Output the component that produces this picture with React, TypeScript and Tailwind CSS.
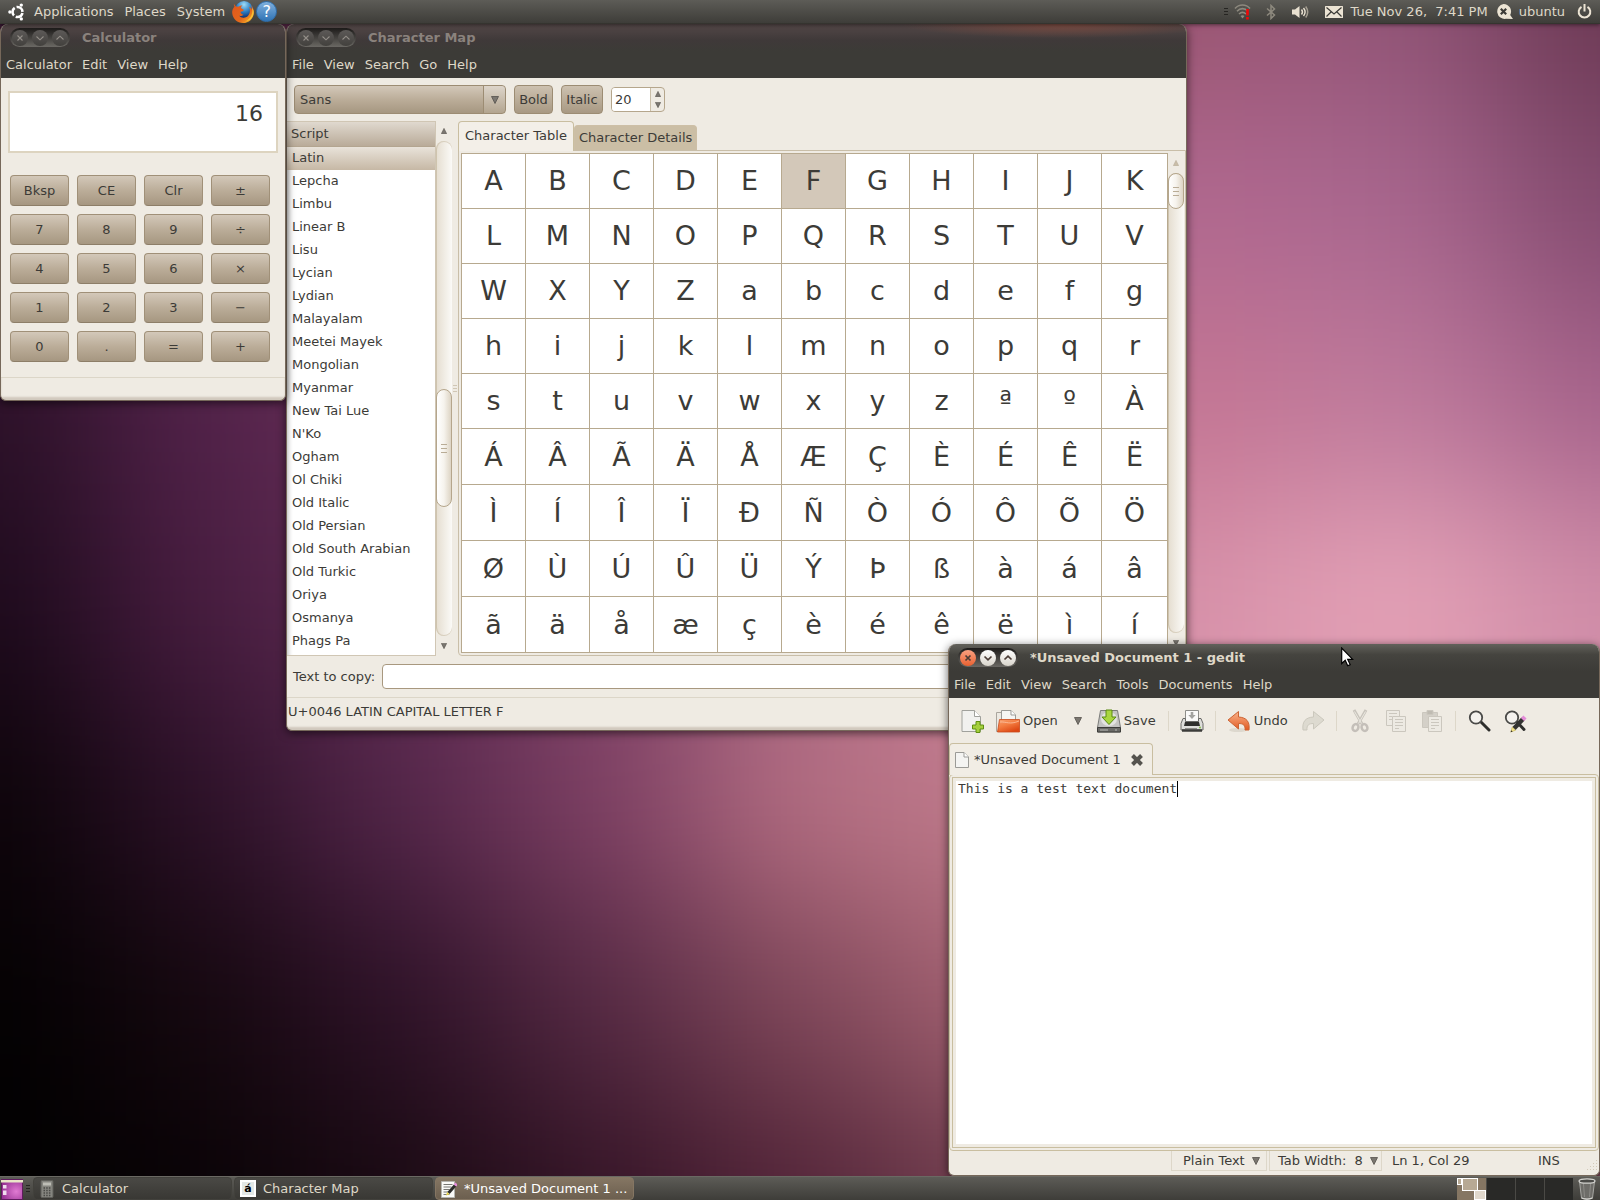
// App.tsx
import React from "react";
import clsx from "clsx";

const SCRIPTS = [
  "Latin", "Lepcha", "Limbu", "Linear B", "Lisu", "Lycian", "Lydian", "Malayalam",
  "Meetei Mayek", "Mongolian", "Myanmar", "New Tai Lue", "N'Ko", "Ogham", "Ol Chiki",
  "Old Italic", "Old Persian", "Old South Arabian", "Old Turkic", "Oriya", "Osmanya", "Phags Pa",
];

const CHAR_ROWS = [
  "ABCDEFGHIJK",
  "LMNOPQRSTUV",
  "WXYZabcdefg",
  "hijklmnopqr",
  "stuvwxyzªºÀ",
  "ÁÂÃÄÅÆÇÈÉÊË",
  "ÌÍÎÏÐÑÒÓÔÕÖ",
  "ØÙÚÛÜÝÞßàáâ",
  "ãäåæçèéêëìí",
];

const CALC_KEYS = [
  "Bksp", "CE", "Clr", "±",
  "7", "8", "9", "÷",
  "4", "5", "6", "×",
  "1", "2", "3", "−",
  "0", ".", "=", "+",
];

// wallpaper colours on a 200px mesh, blurred together
const MESH = [
  ["#3a1834", "#5a2a4c", "#6a3050", "#7a3a58", "#8a4560", "#8a4560", "#9a5672", "#905476", "#6a3852"],
  ["#34152f", "#5c2850", "#703460", "#88446c", "#a05878", "#b06684", "#b06890", "#a8668e", "#824a6e"],
  ["#2c1128", "#52224a", "#6a3058", "#88486c", "#a86080", "#bc6c88", "#c47694", "#be7a9c", "#a5628a"],
  ["#1d0a1c", "#481d40", "#602c54", "#804468", "#a86884", "#cc8098", "#d893ab", "#e6a4b8", "#d08da8"],
  ["#0c0409", "#2c1128", "#54264a", "#7e4064", "#b46e82", "#c07c8c", "#d893ab", "#d893ab", "#cf8ca8"],
  ["#030102", "#15080f", "#2e1228", "#562a44", "#80485a", "#a46272", "#a86474", "#a86474", "#a86474"],
  ["#000000", "#090306", "#190a12", "#341426", "#522438", "#703e4e", "#6c3c4c", "#6c3c4c", "#6c3c4c"],
];

const Wallpaper = () => (
  <svg
    className="absolute inset-0 h-full w-full"
    viewBox="0 0 1600 1200"
    preserveAspectRatio="none"
    aria-hidden="true"
  >
    <defs>
      <filter id="mesh" x="-400" y="-400" width="2400" height="2000" filterUnits="userSpaceOnUse" colorInterpolationFilters="sRGB">
        <feGaussianBlur stdDeviation="75" />
      </filter>
    </defs>
    <g filter="url(#mesh)">
      {MESH.map((row, r) =>
        row.map((fill, c) => (
          <rect
            key={`${r}-${c}`}
            x={c === 0 ? -400 : c * 200 - 100}
            y={r === 0 ? -400 : r * 200 - 100}
            width={c === 0 || c === 8 ? 501 : 201}
            height={r === 0 || r === 6 ? 501 : 201}
            fill={fill}
          />
        ))
      )}
    </g>
  </svg>
);

const UbuntuLogo = () => (
  <svg width="18" height="18" viewBox="0 0 18 18" fill="none" aria-hidden="true">
    <circle cx="9.5" cy="9" r="5" stroke="#fff" strokeWidth="2.6" strokeDasharray="8.5 2" strokeDashoffset="-1" />
    <circle cx="1.9" cy="9" r="1.7" fill="#fff" />
    <circle cx="13.3" cy="2.1" r="1.7" fill="#fff" />
    <circle cx="13.3" cy="15.9" r="1.7" fill="#fff" />
  </svg>
);

const FirefoxIcon = () => (
  <svg width="24" height="24" viewBox="0 0 24 24" aria-hidden="true">
    <defs>
      <radialGradient id="globe" cx="0.5" cy="0.2" r="0.8">
        <stop offset="0" stopColor="#9fdcf7" />
        <stop offset="0.5" stopColor="#2d7fc4" />
        <stop offset="1" stopColor="#0b1f5c" />
      </radialGradient>
      <linearGradient id="fox" x1="0" y1="0" x2="1" y2="1">
        <stop offset="0" stopColor="#e0561c" />
        <stop offset="0.6" stopColor="#e4661b" />
        <stop offset="1" stopColor="#fbc62b" />
      </linearGradient>
    </defs>
    <circle cx="13" cy="10" r="9" fill="url(#globe)" />
    <path
      d="M3 3.400c-.3 1.400 0 2.400.500 3C1.600 8.600 1 10.800 1.200 13 1.700 19 6.400 23 12 23s10.800-4.400 10.800-10.600c0-3-1-5.400-2.600-7.200.7 1.800.7 3 .5 4.600-.6-1.700-1.500-2.400-2.500-3 1.300 3.600 1 7-1.300 9.200-2.500 2.400-7 2.200-8.800-.6 1.600.9 3.400.7 4.600-.6-1.300-.2-2.500-1-3.200-2.200.3-1.300 1.600-1.300 2.800-1.600.5-.6.3-1.400-.3-1.700-1.200-.6-1.900-1-2.200-1.500.2-1 .8-1.700 1.700-2.300-1.500-.2-2.900.2-4 1.200-1-.2-1.700-.2-2.200 0C4.300 5.600 3.300 4.700 3 3.400z"
      fill="url(#fox)"
    />
    <path d="M21 8c1.400 5-.8 11-7 13.500 5-.5 8.800-4.500 8.800-9.500 0-1.500-.8-3-1.800-4z" fill="#fcd03a" opacity="0.8" />
  </svg>
);

const HelpIcon = () => (
  <span className="flex h-[21px] w-[21px] items-center justify-center rounded-full border border-[#2f6fae] bg-linear-to-b from-[#7fb0dd] to-[#2f74b5] text-base leading-4 text-white">
    ?
  </span>
);

const WifiIcon = () => (
  <svg width="18" height="16" viewBox="0 0 18 16" fill="none" aria-hidden="true">
    <path d="M1 4.500C5-.2 12-.2 16 4.500" stroke="#8d897e" strokeWidth="1.600" />
    <path d="M3 7.200C6.200 3.800 10.800 3.800 14 7.200" stroke="#8d897e" strokeWidth="1.600" />
    <path d="M5 10C7.200 8 9.800 8 12 10" stroke="#8d897e" strokeWidth="1.600" />
    <path d="M6.500 12l2 2.600 2-2.600c-1.200-1-2.800-1-4 0z" fill="#8d897e" />
    <path d="M13.500 5v6.500M13.500 13v2.500" stroke="#f00808" strokeWidth="2.600" />
  </svg>
);

const BluetoothIcon = () => (
  <svg width="10" height="16" viewBox="0 0 10 16" fill="none" stroke="#8d897e" strokeWidth="1.500" aria-hidden="true">
    <path d="M1 4.500l7.500 6.500L5 14.500v-13L8.500 5 1 11.500" />
  </svg>
);

const VolumeIcon = () => (
  <svg width="17" height="14" viewBox="0 0 17 14" fill="none" aria-hidden="true">
    <path d="M0 4.500h3L7.500 1v12L3 9.500H0z" fill="#e8e0d0" />
    <path d="M9.500 4.500q2 2.500 0 5M11.500 3q3.200 4 0 8" stroke="#e8e0d0" strokeWidth="1.400" />
    <path d="M13.700 1.500q4 5.500 0 11" stroke="#a39d90" strokeWidth="1.500" />
  </svg>
);

const MailIcon = () => (
  <svg width="18" height="12" viewBox="0 0 18 12" fill="none" aria-hidden="true">
    <rect width="18" height="12" rx="0.500" fill="#ece4d4" />
    <path d="M1.500 1.500L9 8l7.500-6.500M1.500 10.500L6 6M16.500 10.500L12 6" stroke="#3c3b37" strokeWidth="1.200" />
  </svg>
);

const ChatIcon = () => (
  <svg width="17" height="16" viewBox="0 0 17 16" fill="none" aria-hidden="true">
    <path d="M7.500 0a7.500 7.500 0 1 0 2.500 14.800L17 15l-2.800-4A7.500 7.500 0 0 0 7.500 0z" fill="#ece4d4" />
    <path d="M4.800 4.800l5.400 5.400M10.200 4.800l-5.400 5.400" stroke="#3c3b37" strokeWidth="2.200" />
  </svg>
);

const PowerIcon = () => (
  <svg width="15" height="15" viewBox="0 0 15 15" fill="none" stroke="#ece4d4" strokeWidth="2" aria-hidden="true">
    <path d="M4.500 2.800a5.800 5.800 0 1 0 6 0M7.500 0v7.500" />
  </svg>
);

const Handle = () => (
  <span className="flex flex-col gap-0.5" aria-hidden="true">
    <span className="h-px w-1 bg-[#262522]" />
    <span className="h-px w-1 bg-[#262522]" />
    <span className="h-px w-1 bg-[#262522]" />
  </span>
);

const TopPanel = () => (
  <header className="relative z-10 flex h-6 shrink-0 items-center border-b border-[#35342f] bg-linear-to-b from-[#5d5c57] to-[#3e3d39] text-[#dfd8c8] shadow-[0_1px_4px_rgba(0,0,0,0.500)]">
    <nav className="flex items-center pl-2">
      <UbuntuLogo />
      <div className="flex gap-[11px] pr-1.5 pl-2">
        <button>Applications</button>
        <button>Places</button>
        <button>System</button>
      </div>
      <button aria-label="Firefox"><FirefoxIcon /></button>
      <button aria-label="Help" className="ml-px"><HelpIcon /></button>
    </nav>
    <div className="ml-auto flex items-center pr-2">
      <Handle />
      <span className="ml-1.5"><WifiIcon /></span>
      <span className="ml-3.5"><BluetoothIcon /></span>
      <span className="ml-4"><VolumeIcon /></span>
      <span className="ml-4"><MailIcon /></span>
      <time className="ml-2 whitespace-pre">{"Tue Nov 26,  7:41 PM"}</time>
      <span className="ml-2"><ChatIcon /></span>
      <button className="ml-1.5">ubuntu</button>
      <button className="ml-3" aria-label="Power"><PowerIcon /></button>
    </div>
  </header>
);

const BUTTON_GLYPHS = [
  { name: "Close", d: "M5.500 5.500l5 5M10.500 5.500l-5 5" },
  { name: "Minimize", d: "M4.500 6.500L8 9.800l3.500-3.300" },
  { name: "Maximize", d: "M4.500 9.500L8 6.200l3.500 3.300" },
];

const WindowButtons = ({ active }: { active: boolean }) => (
  <div className="flex h-[19px] items-center gap-1 rounded-full bg-linear-to-b from-[#1e1c1b] to-[#6b6964] px-0.5">
    {BUTTON_GLYPHS.map(({ name, d }, i) => (
      <button
        key={name}
        aria-label={name}
        className={clsx(
          "flex h-4 w-4 items-center justify-center rounded-full",
          active && i === 0 && "bg-linear-to-b from-[#f9a080] to-[#e8602e]",
          active && i > 0 && "bg-linear-to-b from-white to-[#d8d4cb]",
          !active && "bg-linear-to-b from-[#5d5a58] to-[#42403d]"
        )}
      >
        <svg width="16" height="16" viewBox="0 0 16 16" fill="none" stroke={active ? "#4a3c36" : "#938e88"} strokeWidth={active ? 1.7 : 1.1}>
          <path d={d} />
        </svg>
      </button>
    ))}
  </div>
);

interface WindowProps {
  title: string;
  menus: string[];
  active?: boolean;
  glow?: boolean;
  className: string;
  children: React.ReactNode;
}

const Window: React.FC<WindowProps> = ({ title, menus, active = false, glow = false, className, children }) => (
  <section
    className={clsx(
      "absolute flex flex-col overflow-hidden rounded-t-lg rounded-b-md border border-t-0 border-[#76685a] bg-[#efebe3] text-[#3c3b37] shadow-[0_2px_10px_rgba(0,0,0,0.600)]",
      className
    )}
  >
    <div
      className={clsx(
        "flex h-[27px] shrink-0 items-center pl-[9px]",
        active && "bg-linear-to-b from-[#62615b] via-[#45443f] via-40% to-[#3c3b37]",
        !active && !glow && "bg-linear-to-b from-[#544848] via-[#3f3939] via-60% to-[#3c3b37]",
        glow && "bg-[radial-gradient(160px_14px_at_86%_0,#7a4a40,transparent),linear-gradient(#544848,#3f3939_60%,#3c3b37)]"
      )}
    >
      <WindowButtons active={active} />
      <h1 className={clsx("ml-3 font-bold", active ? "text-[#dfd8c8]" : "text-[#8a827d]")}>{title}</h1>
    </div>
    <nav className="flex h-[27px] shrink-0 items-center gap-2.5 bg-[#3c3b37] pl-[5px] text-[#dfd8c8]">
      {menus.map((menu) => (
        <button key={menu}>{menu}</button>
      ))}
    </nav>
    {children}
  </section>
);

const Triangle = ({ up = false, size = 8, faded = false }: { up?: boolean; size?: number; faded?: boolean }) => (
  <svg width={size} height={size} viewBox="0 0 8 8" aria-hidden="true">
    <path d={up ? "M4 .5L7.500 7.500h-7z" : "M.5.500h7L4 7.500z"} fill={faded ? "#c9bda8" : "#7a7670"} stroke={faded ? "#b8ac98" : "#55524c"} strokeWidth="0.800" />
  </svg>
);

const Calculator = () => (
  <Window title="Calculator" menus={["Calculator", "Edit", "View", "Help"]} className="top-0 left-0 w-[286px]">
    <input
      aria-label="Result"
      readOnly
      value="16"
      className="mx-[7px] mt-[13px] h-[62px] border-2 border-[#ddd4c0] bg-white pr-[13px] pb-[18px] text-right text-[22px] outline-none"
    />
    <div className="mt-[22px] mr-[15px] ml-[9px] grid grid-cols-4 gap-2">
      {CALC_KEYS.map((key) => (
        <button
          key={key}
          className="h-[31px] rounded border border-[#a09078] border-b-[#8d7e68] bg-linear-to-b from-[#d3c8b9] via-[#bbad99] to-[#a69781]"
        >
          {key}
        </button>
      ))}
    </div>
    <div className="mt-[15px] h-[23px] border-t border-[#dcd6c8] shadow-[inset_0_-3px_2px_rgba(120,100,80,0.250)]" />
  </Window>
);

interface ScrollbarProps {
  thumb: string;
  topFaded?: boolean;
}

const Scrollbar: React.FC<ScrollbarProps> = ({ thumb, topFaded = false }) => (
  <div className="flex w-4 shrink-0 flex-col items-center" aria-hidden="true">
    <span className="flex h-5 items-center"><Triangle up size={6} faded={topFaded} /></span>
    <div className="relative w-full flex-1 rounded-full border-l border-[#cfc4ae] bg-linear-to-r from-[#e6dfd2] to-[#fbfaf7] shadow-[inset_0_1px_0_#d8cfbe,inset_0_-1px_0_#d8cfbe]">
      <div
        className={clsx(
          "absolute -left-px flex w-4 flex-col items-center justify-center gap-[3px] rounded-lg border border-[#b5a68c] bg-linear-to-r from-white via-[#f6f3ed] to-[#ddd4c4]",
          thumb
        )}
      >
        <span className="h-px w-1.5 bg-[#b9ac96]" />
        <span className="h-px w-1.5 bg-[#b9ac96]" />
        <span className="h-px w-1.5 bg-[#b9ac96]" />
      </div>
    </div>
    <span className="flex h-5 items-center"><Triangle size={6} /></span>
  </div>
);

const CharacterMap = () => (
  <Window
    glow
    title="Character Map"
    menus={["File", "View", "Search", "Go", "Help"]}
    className="top-0 left-[286px] w-[901px]"
  >
    <div className="flex h-[43px] items-center gap-2 pl-[7px]">
      <div className="relative h-[29px] w-[212px]">
        <select
          aria-label="Font family"
          className="h-full w-full appearance-none rounded border border-[#9c8c73] bg-linear-to-b from-[#d3c8b9] via-[#bbad99] to-[#a69781] px-[5px] outline-none"
        >
          <option>Sans</option>
        </select>
        <span className="pointer-events-none absolute inset-y-px right-px flex w-[22px] items-center justify-center rounded-r border-l border-[#9c8c73] bg-linear-to-b from-[#ddd5ca] to-[#b3a590]">
          <Triangle />
        </span>
      </div>
      <button className="h-[29px] w-[39px] rounded border border-[#9c8c73] bg-linear-to-b from-[#cdc1b0] to-[#a89983]">Bold</button>
      <button className="h-[29px] w-[42px] rounded border border-[#9c8c73] bg-linear-to-b from-[#cdc1b0] to-[#a89983]">Italic</button>
      <div className="flex h-[25px] w-[54px] overflow-hidden rounded border border-[#b5a68c] bg-[#efebe3]">
        <input aria-label="Font size" defaultValue="20" className="w-[39px] border-r border-[#c9bea8] bg-white pl-[3px] outline-none" />
        <span className="flex flex-1 flex-col items-center justify-around">
          <button aria-label="Increase"><Triangle up size={6} /></button>
          <button aria-label="Decrease"><Triangle size={6} /></button>
        </span>
      </div>
    </div>

    <div className="flex h-[535px]">
      <div className="w-[149px] border border-l-0 border-[#d0c6b4] bg-white shadow-[inset_6px_0_5px_-5px_rgba(0,0,0,0.300)]">
        <div className="flex h-[25px] items-center border-b border-[#b3a590] bg-linear-to-b from-[#e0d9cf] to-[#b9ab99] pl-1">Script</div>
        <ul>
          {SCRIPTS.map((name, i) => (
            <li key={name} className={clsx("h-[23px] pl-[5px] leading-[22px]", i === 0 && "bg-linear-to-b from-[#e9e3da] to-[#c6b8a5]")}>
              {name}
            </li>
          ))}
        </ul>
      </div>
      <Scrollbar thumb="top-[248px] h-[118px]" />
      <div className="flex w-1.5 flex-col items-center justify-center gap-0.5" aria-hidden="true">
        <span className="h-px w-1 bg-[#d0c6b4]" />
        <span className="h-px w-1 bg-[#d0c6b4]" />
        <span className="h-px w-1 bg-[#d0c6b4]" />
      </div>

      <div className="flex min-w-0 flex-1 flex-col">
        <div className="flex h-[29px] items-end">
          <button className="relative -mb-px h-[30px] rounded-t border border-b-0 border-[#c9bea0] bg-[#f3efe8] px-1.5 pb-0.5">Character Table</button>
          <button className="h-[25px] rounded-t border border-b-0 border-[#cdbfa6] bg-[#cbbea5] px-1">Character Details</button>
        </div>
        <div className="flex flex-1 rounded-b border border-[#c9bea8] p-0.5 pr-px">
          <table className="min-w-0 flex-1 border-separate border-spacing-0 border-t border-l border-[#b7a98f] bg-white text-center text-[27px] leading-8">
            <tbody className="contents">
              {CHAR_ROWS.map((row, r) => (
                <tr key={row} className={clsx("flex", r < 5 ? "h-[55px]" : "h-[56px]")}>
                  {[...row].map((ch) => (
                    <td
                      key={ch}
                      className={clsx(
                        "flex w-16 items-center justify-center border-r border-b border-[#b7a98f] last:flex-1",
                        ch === "F" && "bg-[#d3c8b9]"
                      )}
                    >
                      {ch}
                    </td>
                  ))}
                </tr>
              ))}
            </tbody>
          </table>
          <Scrollbar thumb="top-0 h-9" topFaded />
        </div>
      </div>
    </div>

    <div className="mt-2 flex h-[25px] items-center gap-[7px] px-1.5">
      <label htmlFor="copy">Text to copy:</label>
      <input id="copy" className="h-full flex-1 rounded border border-[#a8987f] bg-white px-1 outline-none" />
    </div>
    <footer className="mt-2 h-[33px] border-t border-[#dcd6c8] pl-px leading-[27px] shadow-[inset_0_-3px_2px_rgba(120,100,80,0.250)]">
      U+0046 LATIN CAPITAL LETTER F
    </footer>
  </Window>
);

const NewIcon = () => (
  <svg width="24" height="24" viewBox="0 0 24 24" aria-hidden="true">
    <path d="M2 1.500h12.500l6 6v15H2z" fill="#f1f1ef" stroke="#a0a19c" />
    <path d="M14.500 1.500v6h6" fill="#fff" stroke="#a0a19c" />
    <path d="M16 12.500h4v3.500h3.500v4h-3.500v3.500h-4V20h-3.500v-4h3.500z" fill="#a4cf3c" stroke="#5f8f10" />
  </svg>
);

const OpenIcon = () => (
  <svg width="24" height="24" viewBox="0 0 24 24" aria-hidden="true">
    <defs>
      <linearGradient id="folder" x1="0" y1="0" x2="0.600" y2="1">
        <stop offset="0" stopColor="#f9a271" />
        <stop offset="0.500" stopColor="#f37b3f" />
        <stop offset="1" stopColor="#dd4814" />
      </linearGradient>
    </defs>
    <path d="M.5 3.500h8v19h-8z" fill="#ece9e2" stroke="#aaa69e" />
    <path d="M5.500 1.500H15l4.500 4.500v9h-14z" fill="#f6f6f4" stroke="#9b9b97" />
    <path d="M15 1.500V6h4.500" fill="#fff" stroke="#9b9b97" />
    <path d="M3.500 10.500h20V23H1.500z" fill="url(#folder)" stroke="#c94a1c" strokeWidth="0.800" />
    <path d="M4 13c6-.5 10 3 19-1" stroke="#fcc3a2" strokeWidth="0.800" fill="none" />
  </svg>
);

const SaveIcon = () => (
  <svg width="24" height="24" viewBox="0 0 24 24" aria-hidden="true">
    <path d="M3.500 1.500h17l3 17v4.500H.5v-4.500z" fill="#c4c4c2" stroke="#7b7b79" />
    <ellipse cx="12" cy="10" rx="8" ry="7" fill="#e3e3e1" />
    <path d="M.5 18.500h23V23H.5z" fill="#6a6a67" stroke="#3c3c3a" />
    <path d="M3 21h8M18 21h2" stroke="#b6b6b3" />
    <path d="M9 1h6v7h4l-7 7.500L5 8h4z" fill="#a9d63f" stroke="#5a8a12" />
  </svg>
);

const PrintIcon = () => (
  <svg width="24" height="24" viewBox="0 0 24 24" aria-hidden="true">
    <path d="M5.500 1.500h13v11h-13z" fill="#fafaf9" stroke="#8e8e8a" />
    <path d="M10.700 3h2.600v3h2.400L12 10 8.300 6h2.400z" fill="#a3a3a0" />
    <path d="M3 9.500h2.500v3h13v-3H21l2 5v6.500H1v-6.500z" fill="#dededb" stroke="#6a6a67" />
    <path d="M5 13h14l1 4H4z" fill="#2f2f2d" />
    <path d="M2 21.500h20" stroke="#3c3c3a" strokeWidth="2.500" />
    <path d="M5 19.500h12" stroke="#8e8e8a" />
    <circle cx="20" cy="18.500" r="0.900" fill="#7cba3c" />
  </svg>
);

const UndoIcon = () => (
  <svg width="24" height="24" viewBox="0 0 24 24" aria-hidden="true">
    <defs>
      <linearGradient id="undo" x1="0" y1="0" x2="0" y2="1">
        <stop offset="0" stopColor="#f9b48c" />
        <stop offset="1" stopColor="#e25a22" />
      </linearGradient>
    </defs>
    <ellipse cx="11" cy="21" rx="9" ry="2" fill="#ddd8ce" />
    <path d="M11.500 2.500v5.500c8 .5 11.500 4.500 10.500 13h-4c.5-5-2-6.500-6.500-6.500V20L1 11z" fill="url(#undo)" stroke="#cc6434" strokeLinejoin="round" />
  </svg>
);

const RedoIcon = () => (
  <svg width="24" height="24" viewBox="0 0 24 24" aria-hidden="true">
    <path d="M12.500 2.500v5.500c-8 .5-11.500 4.500-10.500 13h4c-.5-5 2-6.500 6.500-6.500V20L23 11z" fill="#dddad0" stroke="#cbc8bd" strokeLinejoin="round" />
  </svg>
);

const CutIcon = () => (
  <svg width="24" height="24" viewBox="0 0 24 24" fill="none" aria-hidden="true">
    <path d="M6 1l8 14M18 1l-8 14" stroke="#c8c4bc" strokeWidth="3" />
    <path d="M6.500 2.500l7 12M17.500 2.500l-7 12" stroke="#ebe8e1" />
    <ellipse cx="7.500" cy="18.500" rx="2.800" ry="3.500" stroke="#c4bfb9" strokeWidth="2.500" transform="rotate(25 7.500 18.500)" />
    <ellipse cx="16.500" cy="18.500" rx="2.800" ry="3.500" stroke="#c4bfb9" strokeWidth="2.500" transform="rotate(-25 16.500 18.500)" />
  </svg>
);

const CopyIcon = () => (
  <svg width="24" height="24" viewBox="0 0 24 24" fill="#edeae3" stroke="#cbc7be" aria-hidden="true">
    <path d="M2.500 1.500h13v15h-13zM5 4.500h8M5 7.500h3M5 10.500h3" />
    <path d="M8.500 7.500h13v15h-13zM11 10.500h8M11 13.500h8M11 16.500h8M11 19.500h4" />
  </svg>
);

const PasteIcon = () => (
  <svg width="24" height="24" viewBox="0 0 24 24" fill="#edeae3" stroke="#cbc7be" aria-hidden="true">
    <path d="M2.500 3.500h15v15h-15z" fill="#d4d0c8" />
    <path d="M7 1.500h6v4H7z" fill="#bfbbb2" />
    <path d="M8.500 7.500h13v15h-13zM11 10.500h8M11 13.500h8M11 16.500h8M11 19.500h4" />
  </svg>
);

const FindIcon = () => (
  <svg width="24" height="24" viewBox="0 0 24 24" fill="none" aria-hidden="true">
    <path d="M14 13l8 8" stroke="#2e2e2c" strokeWidth="3" strokeLinecap="round" />
    <circle cx="9" cy="8.500" r="6.200" fill="#f4f2ee" stroke="#4a4a48" strokeWidth="1.800" />
  </svg>
);

const ReplaceIcon = () => (
  <svg width="24" height="24" viewBox="0 0 24 24" fill="none" aria-hidden="true">
    <path d="M14 13l7 7.500" stroke="#2e2e2c" strokeWidth="3" strokeLinecap="round" />
    <circle cx="9" cy="8.500" r="6.200" fill="#f4f2ee" stroke="#4a4a48" strokeWidth="1.800" />
    <path d="M20 10L11 19.500" stroke="#333331" strokeWidth="4.500" />
    <path d="M22 8l-2.500 2.500" stroke="#e48bd8" strokeWidth="4.500" />
    <path d="M9.300 18l3.200 3.200L7.800 23z" fill="#f3e38a" stroke="#b9a53e" strokeWidth="0.500" />
    <path d="M8.400 21.200l-.8 2 2-.8z" fill="#222" />
  </svg>
);

const DocIcon = () => (
  <svg width="14" height="16" viewBox="0 0 14 16" fill="#f4f4f2" stroke="#9b9b97" aria-hidden="true">
    <path d="M.5.500h8.500l4.500 4.500v10.500H.5z" />
    <path d="M9 .5V5h4.500" fill="#fff" />
  </svg>
);

interface ToolProps {
  icon: React.ReactNode;
  name: string;
  showLabel?: boolean;
  disabled?: boolean;
}

const Tool: React.FC<ToolProps> = ({ icon, name, showLabel, disabled }) => (
  <button
    aria-label={name}
    disabled={disabled}
    className={clsx("flex items-center gap-[3px] pl-[5px]", showLabel ? "pr-1.5" : "pr-[5px]")}
  >
    {icon}
    {showLabel && <span>{name}</span>}
  </button>
);

const Separator = () => <span className="mx-1 h-5 w-px bg-[#ddd7c9]" />;

const Gedit = () => (
  <Window
    active
    title="*Unsaved Document 1 - gedit"
    menus={["File", "Edit", "View", "Search", "Tools", "Documents", "Help"]}
    className="right-0 bottom-0 h-[532px] w-[652px]"
  >
    <div className="flex h-[45px] shrink-0 items-center gap-0.5 pl-1.5">
      <Tool name="New" icon={<NewIcon />} />
      <Tool name="Open" icon={<OpenIcon />} showLabel />
      <button aria-label="Recent files" className="flex w-6 justify-center"><Triangle /></button>
      <Tool name="Save" icon={<SaveIcon />} showLabel />
      <Separator />
      <Tool name="Print" icon={<PrintIcon />} />
      <Separator />
      <Tool name="Undo" icon={<UndoIcon />} showLabel />
      <Tool name="Redo" icon={<RedoIcon />} disabled />
      <Separator />
      <Tool name="Cut" icon={<CutIcon />} disabled />
      <Tool name="Copy" icon={<CopyIcon />} disabled />
      <Tool name="Paste" icon={<PasteIcon />} disabled />
      <Separator />
      <Tool name="Find" icon={<FindIcon />} />
      <Tool name="Replace" icon={<ReplaceIcon />} />
    </div>

    <div className="relative flex h-[31px] shrink-0">
      <div className="-mb-px flex items-center gap-[5px] rounded-t border border-b-0 border-[#c9bea0] bg-[#f1ede5] pr-2 pl-[5px]">
        <DocIcon />
        <span>*Unsaved Document 1</span>
        <button aria-label="Close tab" className="ml-1">
          <svg width="14" height="14" viewBox="0 0 14 14" fill="none" aria-hidden="true">
            <path d="M2.500 2.500l9 9M11.500 2.500l-9 9" stroke="#55534e" strokeWidth="4" />
          </svg>
        </button>
      </div>
    </div>
    <div className="flex flex-1 rounded border border-[#c9bea0] p-0.5">
      <div className="relative flex flex-1 border border-[#c9bea0] bg-white outline-[3px] -outline-offset-4 outline-[#efebe3]">
        <textarea
          aria-label="Document"
          spellCheck={false}
          defaultValue="This is a test text document"
          className="flex-1 resize-none bg-transparent px-[5px] pt-[3px] font-['DejaVu_Sans_Mono',monospace] text-[13px] leading-4 outline-none"
        />
        <span className="absolute top-[3px] left-[6px] h-4 w-[28ch] border-r border-black font-['DejaVu_Sans_Mono',monospace] text-[13px]" />
      </div>
    </div>
    <footer className="flex h-6 shrink-0 justify-end">
      <button className="flex h-5 w-24 items-center gap-[7px] border border-t-0 border-[#ddd7c9] pl-[11px]">
        Plain Text <Triangle />
      </button>
      <button className="ml-0.5 flex h-5 w-[113px] items-center border border-t-0 border-[#ddd7c9] pl-2">
        <span className="mr-[7px] whitespace-pre">{"Tab Width:  8"}</span>
        <Triangle />
      </button>
      <span className="w-[156px] pl-2.5 leading-5">Ln 1, Col 29</span>
      <span className="w-[47px] leading-5">INS</span>
      <svg width="14" height="24" viewBox="0 0 14 24" fill="#d3cab8" aria-hidden="true">
        <path d="M2 18h1v1H2zM5 15h1v1H5zM8 12h1v1H8zM11 9h1v1h-1zM5 18h1v1H5zM8 15h1v1H8zM11 12h1v1h-1zM8 18h1v1H8zM11 15h1v1h-1zM11 18h1v1h-1z" />
      </svg>
    </footer>
  </Window>
);

const CalcTaskIcon = () => (
  <svg width="16" height="18" viewBox="0 0 16 18" aria-hidden="true">
    <rect x="2" y="0.500" width="12" height="17" rx="1" fill="#85857f" stroke="#5f5f5a" />
    <rect x="4" y="2.500" width="8" height="3" fill="#bdbdb5" />
    <path d="M4.500 8h7M4.500 10.500h7M4.500 13h7M4.500 15.500h7" stroke="#4a4a46" strokeWidth="1.500" strokeDasharray="1.500 1.200" />
  </svg>
);

const CharTaskIcon = () => (
  <span className="flex h-[17px] w-4 items-center justify-center border-2 border-white bg-[#e3e8e6] text-[11px] leading-3 font-bold text-black">á</span>
);

const GeditTaskIcon = () => (
  <svg width="16" height="18" viewBox="0 0 16 18" aria-hidden="true">
    <path d="M.5 1.500h13v16H.5z" fill="#fafaf8" stroke="#b5b5b0" />
    <path d="M2.500 4.500h9M2.500 7h8M2.500 9.500h6M2.500 12h5M2.500 14.500h6" stroke="#777773" />
    <path d="M14 5.500L7.500 13" stroke="#2b2b29" strokeWidth="3" />
    <path d="M15.500 3.500L14 5.500" stroke="#e48bd8" strokeWidth="3" />
    <path d="M6.200 12l2.500 2.200L5 15.500z" fill="#e8d24a" />
  </svg>
);

const TASKS = [
  { label: "Calculator", icon: <CalcTaskIcon />, active: false },
  { label: "Character Map", icon: <CharTaskIcon />, active: false },
  { label: "*Unsaved Document 1 ...", icon: <GeditTaskIcon />, active: true },
];

const BottomPanel = () => (
  <footer className="relative z-10 flex h-6 shrink-0 items-center border-t border-[#6a6963] bg-linear-to-b from-[#5d5c57] to-[#3e3d39] text-[#dfd8c8]">
    <button aria-label="Show desktop" className="ml-px">
      <svg width="22" height="22" viewBox="0 0 22 22" aria-hidden="true">
        <defs>
          <radialGradient id="desk" cx="0.700" cy="0.600" r="0.800">
            <stop offset="0" stopColor="#e07ad2" />
            <stop offset="1" stopColor="#8e2a8c" />
          </radialGradient>
        </defs>
        <rect x="0.500" y="1.500" width="21" height="20" fill="url(#desk)" stroke="#5f1c5e" />
        <path d="M0 2h22v2.500H0z" fill="#e9e6c8" />
        <path d="M2 7h3.500v3.500H2zM2 12.500h3.500V17H2z" fill="#f0dcee" />
      </svg>
    </button>
    <span className="mx-[3px]"><Handle /></span>
    <div className="flex h-full gap-0.5">
      {TASKS.map(({ label, icon, active }) => (
        <button
          key={label}
          className={clsx(
            "flex h-full w-[199px] items-center gap-[7px] rounded border pl-[5px]",
            active
              ? "border-[#857663] bg-linear-to-b from-[#857663] to-[#6c5f4f] text-white"
              : "border-[#42413c] bg-linear-to-b from-[#4a4945] to-[#393834]"
          )}
        >
          {icon}
          {label}
        </button>
      ))}
    </div>
    <div className="mr-1 ml-auto flex h-full items-center">
      <div className="flex h-[22px] gap-px bg-[#4a4945]">
        <button aria-label="Workspace 1" className="bg-[#857663]">
          <svg width="29" height="22" viewBox="0 0 29 22" stroke="#fff" aria-hidden="true">
            <rect x="0.500" y="0.500" width="4" height="6" fill="#b7a994" />
            <rect x="5.500" y="0.500" width="15" height="12" fill="#b7a994" />
            <rect x="17.500" y="12.500" width="11" height="9" fill="#e0d8cc" />
          </svg>
        </button>
        <button aria-label="Workspace 2" className="w-7 bg-[#292927]" />
        <button aria-label="Workspace 3" className="w-7 bg-[#292927]" />
        <button aria-label="Workspace 4" className="w-7 bg-[#292927]" />
      </div>
      <button aria-label="Trash" className="ml-[5px]">
        <svg width="18" height="22" viewBox="0 0 18 22" fill="none" aria-hidden="true">
          <path d="M1.500 3.500l2 16.500q5.500 2.500 11 0l2-16.500" fill="#6d6c68" stroke="#a7a7a3" />
          <path d="M5.500 6l1 13M12.500 6l-1 13" stroke="#8c8b87" />
          <ellipse cx="9" cy="3" rx="8" ry="2.200" fill="#4a4a47" stroke="#d4d4d0" strokeWidth="1.300" />
          <path d="M3.500 20q5.500 2.300 11 0" stroke="#d4d4d0" strokeWidth="1.300" />
        </svg>
      </button>
    </div>
  </footer>
);

const Pointer = () => (
  <svg
    className="pointer-events-none absolute top-[647px] left-[1341px] z-20"
    width="13"
    height="20"
    viewBox="0 0 13 20"
    aria-hidden="true"
  >
    <path d="M.7 1v15.500l3.500-3.300 2.500 5.600 2.500-1.200-2.500-5.200h5z" fill="#fff" stroke="#000" strokeWidth="1.200" />
  </svg>
);

const App: React.FC = () => {
  return (
    <div className="relative flex h-screen w-full flex-col overflow-hidden bg-black font-['DejaVu_Sans',sans-serif] text-[13px] leading-4">
      <Wallpaper />
      <TopPanel />
      <main className="relative flex-1">
        <CharacterMap />
        <Calculator />
        <Gedit />
      </main>
      <BottomPanel />
      <Pointer />
    </div>
  );
};

export default App;
